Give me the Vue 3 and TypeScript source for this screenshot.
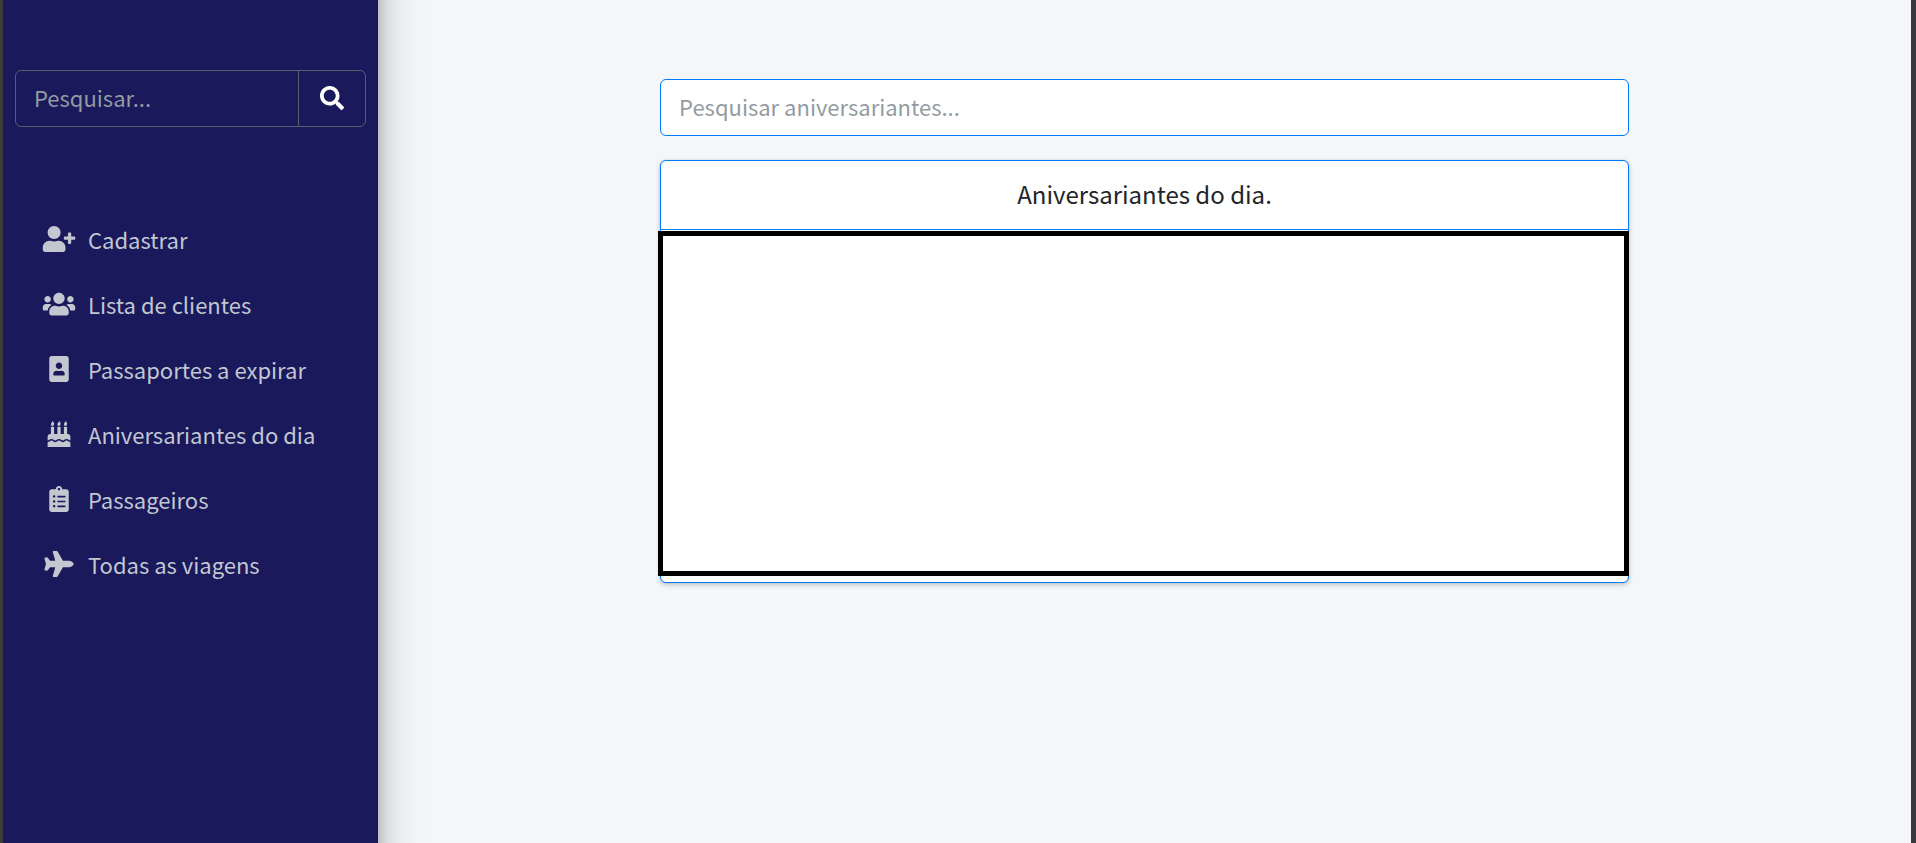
<script setup lang="ts">
import { ref } from 'vue'

interface NavItem {
  label: string
  width: number
  path: string
}

const menuSearch = ref('')
const birthdaySearch = ref('')

const searchIcon =
  'M505 442.7L405.3 343c-4.5-4.5-10.6-7-17-7H372c27.6-35.3 44-79.7 44-128C416 93.1 322.9 0 208 0S0 93.1 0 208s93.1 208 208 208c48.3 0 92.7-16.4 128-44v16.3c0 6.4 2.5 12.5 7 17l99.7 99.7c9.4 9.4 24.6 9.4 33.9 0l28.3-28.3c9.4-9.4 9.4-24.6.1-34zM208 336c-70.7 0-128-57.2-128-128 0-70.7 57.2-128 128-128 70.7 0 128 57.2 128 128 0 70.7-57.2 128-128 128z'

const items: NavItem[] = [
  {
    label: 'Cadastrar',
    width: 640,
    path: 'M624 208h-64v-64c0-8.8-7.2-16-16-16h-32c-8.8 0-16 7.2-16 16v64h-64c-8.8 0-16 7.2-16 16v32c0 8.8 7.2 16 16 16h64v64c0 8.8 7.2 16 16 16h32c8.8 0 16-7.2 16-16v-64h64c8.8 0 16-7.2 16-16v-32c0-8.8-7.2-16-16-16zm-400 48c70.7 0 128-57.3 128-128S294.7 0 224 0 96 57.3 96 128s57.3 128 128 128zm89.6 32h-16.7c-22.2 10.2-46.9 16-72.9 16s-50.6-5.8-72.9-16h-16.7C60.2 288 0 348.2 0 422.4V464c0 26.5 21.5 48 48 48h352c26.5 0 48-21.5 48-48v-41.6c0-74.2-60.2-134.4-134.4-134.4z',
  },
  {
    label: 'Lista de clientes',
    width: 640,
    path: 'M96 224c35.3 0 64-28.7 64-64s-28.7-64-64-64-64 28.7-64 64 28.7 64 64 64zm448 0c35.3 0 64-28.7 64-64s-28.7-64-64-64-64 28.7-64 64 28.7 64 64 64zm32 32h-64c-17.6 0-33.5 7.1-45.1 18.6 40.3 22.1 68.9 62 75.1 109.4h66c17.7 0 32-14.3 32-32v-32c0-35.3-28.7-64-64-64zm-256 0c61.9 0 112-50.1 112-112S381.9 32 320 32 208 82.1 208 144s50.1 112 112 112zm76.8 32h-8.3c-20.8 10-43.9 16-68.5 16s-47.6-6-68.5-16h-8.3C179.6 288 128 339.6 128 403.2V432c0 26.5 21.5 48 48 48h288c26.5 0 48-21.5 48-48v-28.8c0-63.6-51.6-115.2-115.2-115.2zm-223.7-13.4C161.5 263.1 145.6 256 128 256H64c-35.3 0-64 28.7-64 64v32c0 17.7 14.3 32 32 32h65.9c6.3-47.4 34.9-87.3 75.2-109.4z',
  },
  {
    label: 'Passaportes a expirar',
    width: 384,
    path: 'M336 0H48C21.5 0 0 21.5 0 48v416c0 26.5 21.5 48 48 48h288c26.5 0 48-21.5 48-48V48c0-26.5-21.5-48-48-48zM192 128c35.3 0 64 28.7 64 64s-28.7 64-64 64-64-28.7-64-64 28.7-64 64-64zm112 236.8c0 10.6-10 19.2-22.4 19.2H102.4C90 384 80 375.4 80 364.8v-19.2c0-31.8 30.1-57.6 67.2-57.6h5c12.3 5.1 25.7 8 39.8 8s27.6-2.9 39.8-8h5c37.1 0 67.2 25.8 67.2 57.6v19.2z',
  },
  {
    label: 'Aniversariantes do dia',
    width: 448,
    path: 'M448 384c-28.02 0-31.26-32-74.5-32-43.43 0-46.825 32-74.75 32-27.695 0-31.454-32-74.75-32-42.842 0-47.218 32-74.5 32-28.148 0-31.202-32-74.75-32-43.547 0-46.653 32-74.75 32v-80c0-26.5 21.5-48 48-48h16V112h64v144h64V112h64v144h64V112h64v144h16c26.5 0 48 21.5 48 48v80zm0 128H0v-96c43.356 0 46.767-32 74.75-32 27.951 0 31.253 32 74.75 32 42.843 0 47.217-32 74.5-32 28.148 0 31.201 32 74.75 32 43.357 0 46.767-32 74.75-32 27.488 0 31.252 32 74.5 32v96zM96 96c-17.75 0-32-14.25-32-32 0-31 32-23 32-64 12 0 32 29.5 32 56s-14.25 40-32 40zm128 0c-17.75 0-32-14.25-32-32 0-31 32-23 32-64 12 0 32 29.5 32 56s-14.25 40-32 40zm128 0c-17.75 0-32-14.25-32-32 0-31 32-23 32-64 12 0 32 29.5 32 56s-14.25 40-32 40z',
  },
  {
    label: 'Passageiros',
    width: 384,
    path: 'M336 64h-80c0-35.3-28.7-64-64-64s-64 28.7-64 64H48C21.5 64 0 85.5 0 112v352c0 26.5 21.5 48 48 48h288c26.5 0 48-21.5 48-48V112c0-26.5-21.5-48-48-48zM96 424c-13.3 0-24-10.7-24-24s10.7-24 24-24 24 10.7 24 24-10.7 24-24 24zm0-96c-13.3 0-24-10.7-24-24s10.7-24 24-24 24 10.7 24 24-10.7 24-24 24zm0-96c-13.3 0-24-10.7-24-24s10.7-24 24-24 24 10.7 24 24-10.7 24-24 24zm96-192c13.3 0 24 10.7 24 24s-10.7 24-24 24-24-10.7-24-24 10.7-24 24-24zm128 368c0 4.4-3.6 8-8 8H168c-4.4 0-8-3.6-8-8v-16c0-4.4 3.6-8 8-8h144c4.4 0 8 3.6 8 8v16zm0-96c0 4.4-3.6 8-8 8H168c-4.4 0-8-3.6-8-8v-16c0-4.4 3.6-8 8-8h144c4.4 0 8 3.6 8 8v16zm0-96c0 4.4-3.6 8-8 8H168c-4.4 0-8-3.6-8-8v-16c0-4.4 3.6-8 8-8h144c4.4 0 8 3.6 8 8v16z',
  },
  {
    label: 'Todas as viagens',
    width: 576,
    path: 'M480 192H365.71L260.61 8.06A16.014 16.014 0 0 0 246.71 0h-65.5c-10.63 0-18.3 10.17-15.38 20.39L214.86 192H112l-43.2-57.6c-3.02-4.03-7.77-6.4-12.8-6.4H16.01C5.6 128-2.04 137.78.49 147.88L32 256 .49 364.12C-2.04 374.22 5.6 384 16.01 384H56c5.04 0 9.78-2.37 12.8-6.4L112 320h102.86l-49.03 171.6c-2.92 10.22 4.75 20.4 15.38 20.4h65.5c5.74 0 11.04-3.08 13.89-8.06L365.71 320H480c35.35 0 96-28.65 96-64s-60.65-64-96-64z',
  },
]
</script>

<template>
  <div class="layout">
    <aside class="sidebar">
      <form class="menu-search" role="search" @submit.prevent>
        <input v-model="menuSearch" type="search" placeholder="Pesquisar..." aria-label="Pesquisar" />
        <button type="submit" aria-label="Pesquisar">
          <svg viewBox="0 0 512 512" aria-hidden="true"><path :d="searchIcon" /></svg>
        </button>
      </form>
      <nav>
        <ul class="menu">
          <li v-for="item in items" :key="item.label">
            <a href="#">
              <svg :viewBox="`0 0 ${item.width} 512`" aria-hidden="true"><path :d="item.path" /></svg>
              <span>{{ item.label }}</span>
            </a>
          </li>
        </ul>
      </nav>
    </aside>
    <main class="content">
      <div class="column">
        <input
          v-model="birthdaySearch"
          class="filter"
          type="search"
          placeholder="Pesquisar aniversariantes..."
          aria-label="Pesquisar aniversariantes"
        />
        <section class="card">
          <h1>Aniversariantes do dia.</h1>
          <div class="results"></div>
        </section>
      </div>
    </main>
  </div>
</template>

<style>
body {
  margin: 0;
}
</style>

<style scoped>
.layout,
.layout * {
  box-sizing: border-box;
}

.layout {
  display: flex;
  min-height: 100vh;
  overflow: hidden;
  border-left: 3px solid #3d3d3d;
  border-right: 5px solid #383838;
  background: #f4f6f9;
  color: #212529;
  font-family: "Source Sans Pro", "Noto Sans CJK SC", "Noto Sans", sans-serif;
  font-size: 22px;
  line-height: 36px;
}

input,
button {
  min-width: 0;
  margin: 0;
  font: inherit;
  appearance: none;
  outline: 0;
}

input::placeholder {
  color: #939ba2;
  opacity: 1;
}

/* Runs past both page edges so that its shadow keeps an even strength. */
.sidebar {
  flex: 0 0 375px;
  margin: -80px 0;
  padding: 150px 12px 80px;
  background: #19195c;
  box-shadow: 0 21px 42px rgba(0, 0, 0, 0.25), 0 15px 15px rgba(0, 0, 0, 0.22);
}

.menu-search {
  display: flex;
  height: 57px;
  border: 1px solid #56606a;
  border-radius: 6px;
}

.menu-search input {
  flex: 1;
  padding: 0 18px 3px;
  border: 0;
  background: transparent;
  color: #fff;
}

.menu-search button {
  display: flex;
  align-items: center;
  justify-content: center;
  width: 67px;
  padding: 0 0 2px;
  border: 0;
  border-left: 1px solid #56606a;
  background: transparent;
  cursor: pointer;
}

.menu-search svg {
  width: 24px;
  height: 24px;
  fill: #fff;
}

.menu {
  display: grid;
  gap: 4px;
  margin: 81px 0 0;
  padding: 0;
  list-style: none;
}

.menu a {
  display: flex;
  align-items: center;
  gap: 9px;
  height: 61px;
  padding: 0 24px;
  color: #c2c7d0;
  text-decoration: none;
  white-space: nowrap;
}

.menu svg {
  width: 40px;
  height: 26px;
  fill: currentColor;
}

.content {
  flex: 1;
  min-width: 0;
  padding-top: 79px;
}

.column {
  display: grid;
  gap: 24px;
  width: 63.2%;
  margin: 0 auto;
}

.filter {
  width: 100%;
  height: 57px;
  padding: 0 18px 3px;
  border: 1px solid #007bff;
  border-radius: 6px;
  background: #fff;
}

.card {
  padding-bottom: 6px;
  border: 1px solid #007bff;
  border-radius: 6px;
  background: #fff;
  box-shadow: 0 0 2px rgba(0, 0, 0, 0.13), 0 2px 5px rgba(0, 0, 0, 0.2);
}

.card h1 {
  margin: 0;
  padding: 15px 24px 17px;
  border-bottom: 1px solid #007bff;
  font-size: 24px;
  font-weight: 400;
  line-height: 36px;
  text-align: center;
}

.results {
  min-height: 345px;
  margin: 1px -1px 0 -3px;
  border: 5px solid #000;
  background: #fff;
}
</style>
